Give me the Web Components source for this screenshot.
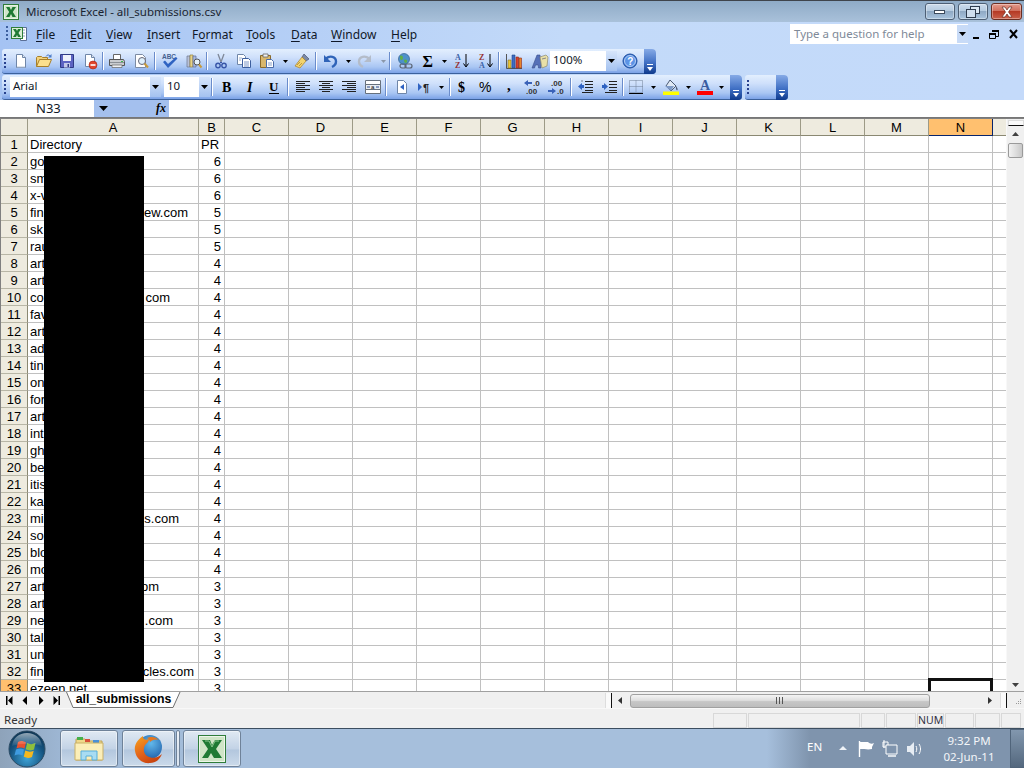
<!doctype html>
<html>
<head>
<meta charset="utf-8">
<title>Microsoft Excel</title>
<style>
  html, body { margin: 0; padding: 0; height: 768px; overflow: hidden; background: #fff; }
  x-app { font-family: "Noto Sans", "Liberation Sans", sans-serif; }
</style>
</head>
<body>
<x-app>
  <x-titlebar slot="title">Microsoft Excel - all_submissions.csv</x-titlebar>
  <x-menubar slot="menu">
    <x-menu key="F" rest="ile" w="34"></x-menu>
    <x-menu key="E" rest="dit" w="36"></x-menu>
    <x-menu key="V" rest="iew" w="41"></x-menu>
    <x-menu key="I" rest="nsert" w="45"></x-menu>
    <x-menu pre="F" key="o" rest="rmat" w="54"></x-menu>
    <x-menu key="T" rest="ools" w="45"></x-menu>
    <x-menu key="D" rest="ata" w="40"></x-menu>
    <x-menu key="W" rest="indow" w="60"></x-menu>
    <x-menu key="H" rest="elp" w="30"></x-menu>
  </x-menubar>
  <x-bands slot="bands">
    <x-band>
      <x-toolbar style="width:654px">
        <x-tool icon="new" w="23"></x-tool><x-tool icon="open" w="23"></x-tool><x-tool icon="save" w="23"></x-tool><x-tool icon="perm" w="23"></x-tool>
        <x-sep></x-sep>
        <x-tool icon="print" w="24"></x-tool><x-tool icon="preview" w="24"></x-tool>
        <x-sep></x-sep>
        <x-tool icon="spell" w="25"></x-tool><x-tool icon="research" w="23"></x-tool>
        <x-sep></x-sep>
        <x-tool icon="cut" w="23"></x-tool><x-tool icon="copy" w="23"></x-tool><x-tool icon="paste" w="24"></x-tool><x-tool icon="drop" w="11"></x-tool><x-tool icon="painter" w="24"></x-tool>
        <x-sep></x-sep>
        <x-tool icon="undo" w="26"></x-tool><x-tool icon="drop" w="7"></x-tool><x-tool icon="redo" w="26"></x-tool><x-tool icon="dropoff" w="11"></x-tool>
        <x-sep></x-sep>
        <x-tool icon="link" w="26"></x-tool><x-tool icon="sigma" w="19"></x-tool><x-tool icon="drop" w="13"></x-tool><x-tool icon="az" w="24"></x-tool><x-tool icon="za" w="23"></x-tool>
        <x-sep></x-sep>
        <x-tool icon="chart" w="26"></x-tool><x-tool icon="draw" w="23"></x-tool>
        <x-combo w="67" text="100%"></x-combo>
        <x-tool icon="help" w="26"></x-tool>
      </x-toolbar>
    </x-band>
    <x-band>
      <x-toolbar style="width:740px">
        <span style="width:1px"></span>
        <x-combo w="151" text="Arial"></x-combo><span style="width:3px"></span>
        <x-combo w="46" text="10"></x-combo>
        <x-sep></x-sep>
        <x-tool icon="bold" w="26"></x-tool><x-tool icon="italic" w="21"></x-tool><x-tool icon="under" w="25"></x-tool>
        <x-sep></x-sep>
        <x-tool icon="left" w="26"></x-tool><x-tool icon="center" w="20"></x-tool><x-tool icon="right" w="26"></x-tool><x-tool icon="merge" w="22"></x-tool>
        <x-sep></x-sep>
        <x-tool icon="rtl" w="28"></x-tool><x-tool icon="ltr" w="18"></x-tool><x-tool icon="drop" w="14"></x-tool>
        <x-sep></x-sep>
        <x-tool icon="dollar" w="22"></x-tool><x-tool icon="percent" w="24"></x-tool><x-tool icon="comma" w="24"></x-tool><x-tool icon="incdec" w="20"></x-tool><x-tool icon="decdec" w="27"></x-tool>
        <x-sep></x-sep>
        <x-tool icon="outdent" w="24"></x-tool><x-tool icon="indent" w="24"></x-tool>
        <x-sep></x-sep>
        <x-tool icon="borders" w="22"></x-tool><x-tool icon="drop" w="12"></x-tool><x-tool icon="fill" w="24"></x-tool><x-tool icon="drop" w="10"></x-tool><x-tool icon="color" w="24"></x-tool><x-tool icon="drop" w="8"></x-tool>
      </x-toolbar>
      <x-toolbar style="width:43px; margin-left:3px"></x-toolbar>
    </x-band>
  </x-bands>
  <x-formula slot="formula" cell="N33"></x-formula>
  <x-sheet slot="sheet"></x-sheet>
  <x-tabs slot="tabs" name="all_submissions"></x-tabs>
  <x-status slot="status" text="Ready"></x-status>
  <x-taskbar slot="taskbar"></x-taskbar>
</x-app>

<script>
const ICONS = {
  new: `<path d="M3.500 1.500h6l3 3v10h-9z" fill="#fff" stroke="#6f86a8"/><path d="M9.500 1.500v3h3" fill="#dfe6f0" stroke="#6f86a8"/><path d="M4 14h8" stroke="#b9c6da"/>`,
  open: `<path d="M0.500 13.500v-9l1-1h4l1 1h5v2" fill="#f3d27a" stroke="#a77f2a"/><path d="M.5 13.500l3-7h12l-3 7z" fill="#fbe08e" stroke="#a77f2a"/><path d="M10 3.500c1-2 3-2 4-.5" fill="none" stroke="#4a7bc8"/><path d="M15.500 1v3.500h-3.500z" fill="#4a7bc8"/>`,
  save: `<path d="M1.500 1.500h13v13h-13z" fill="#5c63c2" stroke="#2f3a86"/><path d="M4 2h8v6H4z" fill="#eef1fb"/><path d="M5 10h6v4.500H5z" fill="#c4c9e8"/><path d="M8.500 11h1.500v3H8.500z" fill="#2f3a86"/>`,
  perm: `<path d="M3.500 1.500h6l3 3v9h-9z" fill="#fff" stroke="#6f86a8"/><path d="M9.500 1.500v3h3" fill="#dfe6f0" stroke="#6f86a8"/><circle cx="11" cy="12" r="4" fill="#e0452c" stroke="#a62313" stroke-width=".6"/><path d="M8.500 11.200h5v1.600h-5z" fill="#fff"/>`,
  print: `<path d="M4.500 1.500h7v5h-7z" fill="#fff" stroke="#666"/><path d="M.5 6.500h14l1 2v4h-15z" fill="#c9ccd0" stroke="#555"/><path d="M1 9h14v1H1z" fill="#8b9096"/><path d="M3 12h10v2.500H3z" fill="#eef0f2" stroke="#666" stroke-width=".7"/><path d="M12 8h2v1h-2z" fill="#3bb54a"/>`,
  preview: `<path d="M2.500 1.500h7l3 3v10h-10z" fill="#fff" stroke="#7c8ba3"/><circle cx="9" cy="8" r="3.500" fill="#dff0fb" stroke="#667"/><path d="M11.500 10.500l3.500 4" stroke="#c79a3b" stroke-width="2"/>`,
  spell: `<text x="0" y="6" font-family="Liberation Sans" font-size="6.500" font-weight="700" fill="#44608f" textLength="14">ABC</text><path d="M1 9l2-1.500 3 3.500 8-7 1.500 1.500L6 15z" fill="#2f63c2"/>`,
  research: `<path d="M1 3h3v11H1z" fill="#b8c1d8" stroke="#6a7690" stroke-width=".7"/><path d="M4 2h3v12H4z" fill="#e8d48a" stroke="#93803a" stroke-width=".7"/><path d="M7 3h3v11H7z" fill="#a9bbe0" stroke="#5c6c96" stroke-width=".7"/><circle cx="11" cy="9" r="3" fill="#e6f3fb" stroke="#555"/><path d="M13 11.500l2.500 3" stroke="#c79a3b" stroke-width="2"/>`,
  cut: `<path d="M5 1l3 8M11 1L8 9" stroke="#7f8898" stroke-width="1.300" fill="none"/><circle cx="5" cy="12.500" r="2.200" fill="none" stroke="#3856a8" stroke-width="1.400"/><circle cx="11" cy="12.500" r="2.200" fill="none" stroke="#3856a8" stroke-width="1.400"/><path d="M8 9l-2 2M8 9l2 2" stroke="#3856a8"/>`,
  copy: `<path d="M1.500 1.500h6l2 2v8h-8z" fill="#fff" stroke="#6f86a8"/><path d="M6.500 5.500h6l2 2v7h-8z" fill="#fff" stroke="#3d5f9e"/><path d="M8 9h5M8 11h5M8 13h5" stroke="#7d96c6"/><path d="M3 5h3M3 7h2" stroke="#9db0d0"/>`,
  paste: `<path d="M1.500 2.500h10v12h-10z" fill="#d9b76c" stroke="#8a6a2b"/><path d="M4 1h5v3H4z" fill="#f0f0f0" stroke="#666" stroke-width=".8"/><path d="M7.500 6.500h5l2 2v6h-7z" fill="#fff" stroke="#4a6ba8"/><path d="M9 10h4M9 12h4" stroke="#8aa0c8"/>`,
  painter: `<path d="M10 1l5 5-3 2-4-4z" fill="#7c8aa6" stroke="#4a556e" stroke-width=".7"/><path d="M8 4l4 4-6 7-5-2z" fill="#f2d36d" stroke="#a77f2a" stroke-width=".7"/><path d="M3 12l3-3M5 13l3-3" stroke="#a77f2a" stroke-width=".7"/>`,
  undo: `<path d="M3 5.500c3.500-3 10-2.500 10 3 0 3-2 4.500-4 5.500" fill="none" stroke="#2f63b8" stroke-width="2.400"/><path d="M1 2v7h7z" fill="#2f63b8"/>`,
  redo: `<path d="M13 5.500C9.500 2.500 3 3 3 8.500c0 3 2 4.500 4 5.500" fill="none" stroke="#b4bcc9" stroke-width="2.400"/><path d="M15 2v7H8z" fill="#b4bcc9"/>`,
  link: `<circle cx="7" cy="6" r="5.500" fill="#4d90c9" stroke="#2f5f8f" stroke-width=".7"/><path d="M3 3c2-1 3 0 3 2s-2 3-3 1zM7 7c2-1 4 0 3 2s-3 1-3-2z" fill="#5fae4a"/><rect x="3" y="11" width="6" height="4" rx="2" fill="none" stroke="#5a6474" stroke-width="1.200"/><rect x="8" y="11" width="7" height="4" rx="2" fill="none" stroke="#5a6474" stroke-width="1.200"/>`,
  sigma: `<text x="2.500" y="13.500" font-family="Liberation Serif" font-size="16" font-weight="700" fill="#000">Σ</text>`,
  az: `<text x="1" y="7" font-family="Liberation Serif" font-size="8" font-weight="700" fill="#3a62a8">A</text><text x="1" y="15" font-family="Liberation Serif" font-size="8" font-weight="700" fill="#963232">Z</text><path d="M12 1v12" stroke="#000"/><path d="M9.500 10.500l2.500 3.500 2.500-3.500" fill="none" stroke="#000"/>`,
  za: `<text x="1" y="7" font-family="Liberation Serif" font-size="8" font-weight="700" fill="#963232">Z</text><text x="1" y="15" font-family="Liberation Serif" font-size="8" font-weight="700" fill="#3a62a8">A</text><path d="M12 1v12" stroke="#000"/><path d="M9.500 10.500l2.500 3.500 2.500-3.500" fill="none" stroke="#000"/>`,
  chart: `<path d="M.5 1v14.500H16" fill="none" stroke="#555"/><path d="M2 7h3v8H2z" fill="#e8c53a" stroke="#8a7420" stroke-width=".6"/><path d="M6 2h3v13H6z" fill="#3d6cc4" stroke="#244a8c" stroke-width=".6"/><path d="M10 4h2.500v11H10z" fill="#d8402c" stroke="#8f2617" stroke-width=".6"/><path d="M13 5h2.500v10H13z" fill="#e8862c" stroke="#8f2617" stroke-width=".6"/>`,
  draw: `<path d="M1 15L6 2h3l1 13H7.500l-.3-3H4.500l-1 3z" fill="#5570b8" stroke="#3a4f8a" stroke-width=".6"/><path d="M9 4l6-2 2 2-1 9-5 2z" fill="#e9e0a8" stroke="#8d8a70" stroke-width=".7"/><path d="M11 6l4-1" stroke="#888"/>`,
  help: `<circle cx="8" cy="8" r="7" fill="#3d78d6" stroke="#1f4f9e"/><circle cx="8" cy="8" r="5.500" fill="#5c94e6" stroke="#cfe0f8" stroke-width=".8"/><text x="5.200" y="12" font-family="Liberation Sans" font-size="10" font-weight="700" fill="#fff">?</text>`,
  bold: `<text x="3" y="13" font-family="Liberation Serif" font-size="14" font-weight="700" fill="#000">B</text>`,
  italic: `<text x="4" y="13" font-family="Liberation Serif" font-size="14" font-style="italic" font-weight="700" fill="#000">I</text>`,
  under: `<text x="3" y="12" font-family="Liberation Serif" font-size="13" font-weight="700" fill="#000">U</text><path d="M3 14.500h10" stroke="#000"/>`,
  left: `<path d="M1 2.500h14M1 4.500h9M1 6.500h14M1 8.500h9M1 10.500h14M1 12.500h9" stroke="#222"/>`,
  center: `<path d="M1 2.500h14M4 4.500h8M1 6.500h14M4 8.500h8M1 10.500h14M4 12.500h8" stroke="#222"/>`,
  right: `<path d="M1 2.500h14M6 4.500h9M1 6.500h14M6 8.500h9M1 10.500h14M6 12.500h9" stroke="#222"/>`,
  merge: `<path d="M.5 1.500h15v13H.5z" fill="#fff" stroke="#66707c"/><path d="M.5 5.500h15v5H.5z" fill="#e9ecef" stroke="#66707c"/><path d="M2 8h3M14 8h-3" stroke="#2a4a90"/><text x="6" y="10" font-family="Liberation Sans" font-size="6" fill="#000">a</text>`,
  rtl: `<path d="M3.500 1.500h6l3 3v10h-9z" fill="#fff" stroke="#6f86a8"/><path d="M6 8l4-3v6z" fill="#2f63c2"/>`,
  ltr: `<path d="M1 4l4 4-4 4z" fill="#2f63c2"/><text x="6" y="13" font-family="Liberation Sans" font-size="11" font-weight="700" fill="#222">¶</text>`,
  dollar: `<text x="3" y="13" font-family="Liberation Serif" font-size="14" font-weight="700" fill="#000">$</text>`,
  percent: `<text x="1" y="13" font-family="Liberation Sans" font-size="14" fill="#000">%</text>`,
  comma: `<text x="5" y="11" font-family="Liberation Serif" font-size="15" font-weight="700" fill="#000">,</text>`,
  incdec: `<path d="M0 4l4-3v2h4v2H4v2z" fill="#3a62b8"/><text x="9" y="7" font-family="Liberation Sans" font-size="8" font-weight="700" fill="#333">.0</text><text x="2" y="15" font-family="Liberation Sans" font-size="8" font-weight="700" fill="#333">.00</text>`,
  decdec: `<text x="3" y="7" font-family="Liberation Sans" font-size="8" font-weight="700" fill="#333">.00</text><path d="M8 12l-4 3v-2H0v-2h4V9z" fill="#3a62b8"/><text x="9" y="15" font-family="Liberation Sans" font-size="8" font-weight="700" fill="#333">.0</text>`,
  outdent: `<path d="M1 7.500l4-3.500v2h2v3H5v2z" fill="#2f63c2"/><path d="M8 2.500h8M8 5.500h8M8 8.500h8M8 11.500h8M5 1.500v1M5 13.500h11" stroke="#222"/>`,
  indent: `<path d="M7 7.500L3 4v2H1v3h2v2z" fill="#2f63c2"/><path d="M8 2.500h8M8 5.500h8M8 8.500h8M8 11.500h8M4 13.500h12" stroke="#222"/>`,
  borders: `<path d="M1.500 1.500h13v12h-13zM8 1.500v12M1.500 7.500h13" fill="none" stroke="#6f7f96" stroke-dasharray="1 1"/><path d="M1 14.500h14" stroke="#000"/>`,
  fill: `<path d="M7 1l6 6-5 5-5-5z" fill="#dfe9f5" stroke="#4b5a72"/><path d="M13 7c1 1.500 2 3 1.500 4s-2 0-1.500-4z" fill="#4b5a72"/><path d="M2 7h9l-3 5z" fill="#7f9bc8"/><path d="M0 12.500h16v3.500H0z" fill="#ffff00"/>`,
  color: `<text x="3" y="11" font-family="Liberation Serif" font-size="14" font-weight="700" fill="#3a5ca0">A</text><path d="M0 12h16v4H0z" fill="#ff0000"/>`,
  drop: `<path d="M4 7h5L6.500 10z" fill="#000"/>`,
  dropoff: `<path d="M4 7h5L6.500 10z" fill="#8a97aa"/>`
};

class Base extends HTMLElement {
  shadow(html) {
    this.attachShadow({mode: 'open'}).innerHTML = html;
  }
}

customElements.define('x-app', class extends Base {
  constructor() {
    super();
    this.shadow(`
      <style>
        :host { display: flex; flex-direction: column; width: 1024px; height: 768px; overflow: hidden; }
        .fill { flex: 1; min-height: 0; display: flex; }
      </style>
      <slot name="title"></slot><slot name="menu"></slot><slot name="bands"></slot><slot name="formula"></slot>
      <div class="fill"><slot name="sheet"></slot></div>
      <slot name="tabs"></slot><slot name="status"></slot><slot name="taskbar"></slot>`);
  }
});

customElements.define('x-titlebar', class extends Base {
  constructor() {
    super();
    this.shadow(`
      <style>
        :host { display: flex; align-items: center; height: 22px; box-sizing: border-box; border-top: 1px solid #3f444c;
          background: linear-gradient(#8fabc7, #a9c1da); font: 11.5px "Noto Sans", sans-serif; color: #1a2430; }
        .logo { margin: 1px 7px 0 3px; width: 16px; height: 16px; }
        .text { flex: 1; }
        .ctrls { display: flex; gap: 3px; margin-right: 2px; }
        .b { width: 30px; height: 17px; box-sizing: border-box; border: 1px solid #4d5f75; border-radius: 3px; display: flex; align-items: center; justify-content: center;
          background: linear-gradient(#cddcec 0, #b5cbe0 45%, #8fa9c4 50%, #a9c4de 100%); box-shadow: inset 0 0 0 1px rgba(255,255,255,.35); }
        .c { background: linear-gradient(#e39a8c 0, #d0705e 45%, #b53a25 50%, #c9604a 100%); border-color: #6b2e22; width: 31px; }
      </style>
      <svg class="logo" viewBox="0 0 16 16"><rect x=".5" y=".5" width="15" height="15" fill="#e8f3e4" stroke="#2f7d3a"/><rect x="2" y="2" width="12" height="12" fill="#cfe6c8"/><path d="M3 3h3.500L8 6l1.500-3H13l-3.200 5 3.200 5H9.500L8 10l-1.500 3H3l3.200-5z" fill="#1f7a33"/></svg>
      <span class="text"><slot></slot></span>
      <div class="ctrls">
        <div class="b"><svg width="12" height="6"><rect x=".5" y="1.500" width="10" height="3" fill="#fff" stroke="#3c4a5c"/></svg></div>
        <div class="b"><svg width="14" height="12"><rect x="4.500" y=".5" width="9" height="7" fill="#dce8f3" stroke="#2f3c4e"/><rect x=".5" y="3.500" width="9" height="8" fill="#cfdeee" stroke="#2f3c4e"/></svg></div>
        <div class="b c"><svg width="14" height="12" viewBox="0 0 14 12"><path d="M2 1h3l2 3 2-3h3L8.500 6 12 11H9L7 8l-2 3H2l3.500-5z" fill="#fff" stroke="#6b2e22" stroke-width=".7"/></svg></div>
      </div>`);
  }
});

customElements.define('x-menubar', class extends Base {
  constructor() {
    super();
    this.shadow(`
      <style>
        :host { display: flex; align-items: center; height: 27px; box-sizing: border-box; padding: 0 0 4px 6px;
          background: linear-gradient(90deg, #a5c3f3, #c3daf9 55%, #c4dafa); font: 12px "Noto Sans", sans-serif; color: #101828; }
        .grip { width: 2px; height: 16px; background: repeating-linear-gradient(#3d5f9e 0 2px, transparent 2px 4px); }
        .logo { margin: 0 8px 0 2px; width: 18px; height: 18px; }
        .help { margin-left: auto; display: flex; align-items: center; }
        .box { width: 178px; height: 20px; box-sizing: border-box; border: 1px solid #fff; background: #fff; color: #808a98; display: flex; align-items: center; padding-left: 3px; font-size: 11.5px; }
        .box span { flex: 1; }
        .box i { width: 11px; height: 18px; margin-right: -1px; background: #c8dbf7; display: flex; align-items: center; justify-content: center; }
        svg.c { display: block; }
        ::slotted(x-menu) { margin-top: 2px; }
      </style>
      <div class="grip"></div>
      <svg class="logo" viewBox="0 0 18 18"><path d="M10.500 2.500h6v13h-6z" fill="#fff" stroke="#5a6f96"/><path d="M12 5h3M12 8h3M12 11h3" stroke="#8ea2c4"/><rect x="1.500" y="2.500" width="11" height="11" fill="#dcefd6" stroke="#2f7d3a"/><path d="M3 4h3l1 2 1-2h3L8.500 8 11 12H8L7 10l-1 2H3l2.500-4z" fill="#1f7a33"/></svg>
      <slot></slot>
      <div class="help">
        <div class="box"><span>Type a question for help</span><i><svg width="7" height="4"><path d="M0 0h7L3.500 4z" fill="#000"/></svg></i></div>
        <svg class="c" width="56" height="18" viewBox="0 0 56 18">
          <path d="M5 12h6v2H5z" fill="#000"/>
          <path d="M24.500 6.500h6v5h-3M21.500 9.500h6v4h-6z" fill="none" stroke="#000"/><path d="M24 5h7v2h-7zM21 8h7v2h-7z" fill="#000"/>
          <path d="M42 5l7 8M49 5l-7 8" stroke="#000" stroke-width="2"/>
        </svg>
      </div>`);
  }
});

customElements.define('x-menu', class extends Base {
  connectedCallback() {
    if (this.shadowRoot) return;
    const a = n => this.getAttribute(n) || '';
    this.shadow(`<style>:host { display: block; width: ${a('w')}px; } u { text-underline-offset: 2px; }</style>${a('pre')}<u>${a('key')}</u>${a('rest')}`);
  }
});

customElements.define('x-bands', class extends Base {
  constructor() {
    super();
    this.shadow(`<style>:host { display: flex; flex-direction: column; gap: 1px; height: 51px; padding-left: 2px; box-sizing: border-box; background: linear-gradient(90deg, #a5c3f3, #c3daf9 55%, #c4dafa); }</style><slot></slot>`);
  }
});

customElements.define('x-band', class extends Base {
  constructor() {
    super();
    this.shadow(`<style>:host { display: flex; }</style><slot></slot>`);
  }
});

customElements.define('x-toolbar', class extends Base {
  constructor() {
    super();
    this.shadow(`
      <style>
        :host { display: flex; align-items: center; flex: none; height: 25px; box-sizing: border-box; padding-right: 12px; position: relative;
          border-radius: 3px 4px 4px 3px; border-bottom: 1px solid #3b619c;
          background: linear-gradient(#e3effe 0, #cfe0fb 35%, #a9c6f3 75%, #7ba2e7 100%); }
        .grip { width: 2px; height: 15px; margin: 0 3px 0 2px; background: repeating-linear-gradient(#27418e 0 2px, transparent 2px 4px); flex: none; }
        .end { position: absolute; right: 0; top: 0; bottom: -1px; width: 12px; border-radius: 0 4px 4px 0;
          background: linear-gradient(#86aae6, #3f6fc4 55%, #0f3a8c); display: flex; flex-direction: column; align-items: center; justify-content: flex-end; padding-bottom: 3px; box-sizing: border-box; }
        ::slotted(x-tool), ::slotted(span) { flex: none; }
      </style>
      <div class="grip"></div><slot></slot>
      <div class="end"><svg width="7" height="7"><path d="M0 0h6v1H0zM0 3h6L3 7z" fill="#fff"/></svg></div>`);
  }
});

customElements.define('x-tool', class extends Base {
  connectedCallback() {
    if (this.shadowRoot) return;
    const w = this.getAttribute('w'), i = this.getAttribute('icon');
    const drop = i.startsWith('drop');
    this.shadow(`
      <style>:host { display: flex; align-items: center; justify-content: center; width: ${w}px; height: 24px; } svg { display: block; overflow: visible; flex: none; }</style>
      <svg width="${drop ? 12 : 16}" height="16" viewBox="0 0 ${drop ? 12 : 16} 16">${ICONS[i] || ''}</svg>`);
  }
});

customElements.define('x-sep', class extends Base {
  constructor() {
    super();
    this.shadow(`<style>:host { display: block; flex: none; width: 1px; height: 18px; margin: 0 2px 0 1px; background: #6a8ccb; box-shadow: 1px 0 0 #fff; }</style>`);
  }
});

customElements.define('x-combo', class extends Base {
  connectedCallback() {
    if (this.shadowRoot) return;
    this.shadow(`
      <style>
        :host { display: flex; flex: none; align-items: center; width: ${this.getAttribute('w')}px; height: 20px; box-sizing: border-box; background: #fff;
          font: 11.5px "Noto Sans", sans-serif; color: #101828; }
        span { flex: 1; padding: 0 0 3px 3px; }
        i { width: 11px; height: 100%; background: linear-gradient(#d6e5fb, #a4c2f0); display: flex; align-items: center; justify-content: center; }
      </style>
      <span>${this.getAttribute('text')}</span><i><svg width="7" height="4"><path d="M0 0h7L3.500 4z" fill="#000"/></svg></i>`);
  }
});

customElements.define('x-formula', class extends Base {
  connectedCallback() {
    if (this.shadowRoot) return;
    this.shadow(`
      <style>
        :host { display: flex; height: 18px; box-sizing: border-box; background: #fff; border-bottom: 1px solid #777; font: 13px "Noto Sans", sans-serif; color: #101828; }
        .name { width: 94px; padding-left: 36px; box-sizing: border-box; line-height: 17px; }
        .rest { width: 75px; background: #a4c0ee; display: flex; align-items: center; justify-content: space-between; padding: 0 3px 0 5px; box-sizing: border-box; height: 17px; }
        em { font: italic 700 12px "Liberation Serif", serif; color: #000; }
      </style>
      <div class="name">${this.getAttribute('cell')}</div>
      <div class="rest"><svg width="9" height="5"><path d="M0 0h9L4.500 5z" fill="#000"/></svg><em>fx</em></div>`);
  }
});

const ROWS = [
  ['Directory', '', 'PR'], ['go', '', 6], ['sm', '', 6], ['x-v', '', 6], ['fin', 'ew.com', 5, 7], ['sk', '', 5], ['rau', '', 5],
  ['art', '', 4], ['art', '', 4], ['co', 'com', 4, 25], ['fav', '', 4], ['art', '', 4], ['ad', '', 4], ['tin', '', 4], ['on', '', 4],
  ['for', '', 4], ['art', '', 4], ['int', '', 4], ['gh', '', 4], ['be', '', 4], ['itis', '', 4], ['ka', '', 4],
  ['mi', 's.com', 4, 16], ['so', '', 4], ['blo', '', 4], ['mo', '', 4], ['art', 'om', 3, 36], ['art', '', 3], ['ne', '.com', 3, 22],
  ['tal', '', 3], ['un', '', 3], ['fin', 'cles.com', 3, 1], ['ezeen.net', '', 3]
];

customElements.define('x-sheet', class extends Base {
  constructor() {
    super();
    const cols = 'ABCDEFGHIJKLMN'.split('');
    let html = '<div class="h corner"></div>';
    cols.forEach(c => { html += `<div class="h${c == 'N' ? ' on' : ''}">${c}</div>`; });
    html += '<div class="h end"></div>';
    ROWS.forEach((r, i) => {
      const n = i + 1, last = n == 33;
      html += `<div class="h r${last ? ' on' : ''}">${n}</div>`;
      html += `<div class="c">${r[0]}${r[1] ? `<span style="margin-left:auto;margin-right:${r[3]}px">${r[1]}</span>` : ''}</div>`;
      html += `<div class="c${i ? ' num' : ''}">${r[2]}</div>`;
      for (let k = 2; k < cols.length; k++) html += `<div class="c${last && k == 13 ? ' active' : ''}"></div>`;
      html += '<div class="c"></div>';
    });
    this.shadow(`
      <style>
        :host { display: flex; flex: 1; min-width: 0; background: #fff; overflow: hidden; position: relative; border-top: 1px solid #808080; border-left: 1px solid #808080; box-sizing: border-box; font: 13px "Liberation Sans", sans-serif; color: #000; }
        .grid { flex: 1; display: grid; grid-template-columns: 27px 171px 26px repeat(12, 64px) 14px; grid-template-rows: 17px; grid-auto-rows: 17px; align-content: start; overflow: hidden; }
        .grid > div { box-sizing: border-box; white-space: nowrap; line-height: 18px; }
        .h { background: #eeebdf; text-align: center; border-right: 1px solid #9d9a86; border-bottom: 1px solid #8a8872; }
        .r { border-bottom-color: #b8b6a6; border-right-color: #8a8872; }
        .h.on { background: #ffc06f; border-right-color: #08246b; border-bottom-color: #08246b; }
        .r.on { border-right-color: #8a8872; border-bottom: 0; }
        .h.end { border-right: 0; }
        .c { border-right: 1px solid #c0c0c0; border-bottom: 1px solid #c0c0c0; padding: 0 3px 0 2px; display: flex; position: relative; overflow: visible; }
        .num { justify-content: flex-end; }
        .active::after { content: ""; position: absolute; left: -1px; top: -2px; width: 65px; height: 18px; box-sizing: border-box; border: 3px solid #111; }
        .redact { position: absolute; left: 43px; top: 37px; width: 100px; height: 526px; background: #000; }
        .v { width: 18px; flex: none; background: #f0f0f0; display: flex; flex-direction: column; align-items: center; box-sizing: border-box; padding-top: 1px; border-left: 1px solid #f8f8f8; }
        .split { width: 16px; height: 6px; box-sizing: border-box; background: #fafafa; border: 1px solid #ddd; border-bottom: 1px solid #111; }
        .arrow { margin: 6px 0 7px; }
        .thumb { width: 15px; height: 15px; box-sizing: border-box; border: 1px solid #9a9a9a; border-radius: 2px; background: linear-gradient(90deg, #f2f2f2, #dcdcdc 55%, #c8c8c8); }
        .down { margin-top: auto; margin-bottom: 4px; }
      </style>
      <div class="grid">${html}</div>
      <div class="redact"></div>
      <div class="v"><div class="split"></div>
        <svg class="arrow" width="7" height="4"><path d="M3.500 0L7 4H0z" fill="#404040"/></svg>
        <div class="thumb"></div>
        <svg class="down" width="7" height="4"><path d="M0 0h7L3.500 4z" fill="#404040"/></svg>
      </div>`);
  }
});

customElements.define('x-tabs', class extends Base {
  connectedCallback() {
    if (this.shadowRoot) return;
    const tri = (d) => `<svg width="8" height="9" viewBox="0 0 8 9"><path d="${d}" fill="#000"/></svg>`;
    this.shadow(`
      <style>
        :host { display: flex; align-items: stretch; height: 17px; box-sizing: border-box; background: #f0f0f0; border-top: 1px solid #a0a0a0; }
        .nav { display: flex; align-items: center; width: 66px; padding-left: 5px; gap: 8px; box-sizing: border-box; flex: none; }
        .tab { position: relative; width: 115px; flex: none; text-align: center; font: 700 12.3px "Liberation Sans", sans-serif; line-height: 15px; color: #000; }
        .tab svg { position: absolute; inset: 0; z-index: 0; }
        .tab span { position: relative; }
        .space { flex: 1; }
        .hs { width: 402px; flex: none; display: flex; align-items: center; margin-top: 1px; }
        .split { width: 7px; height: 15px; box-sizing: border-box; background: #fafafa; border-right: 1px solid #111; border-left: 1px solid #ddd; flex: none; }
        .track { flex: 1; display: flex; align-items: center; }
        .thumb { width: 300px; height: 14px; box-sizing: border-box; border: 1px solid #a0a0a0; border-radius: 3px; background: linear-gradient(#f4f4f4, #dedede 45%, #c6c6c6 55%, #bdbdbd); display: flex; align-items: center; justify-content: center; margin-left: 8px; flex: none; }
        .grip { width: 17px; flex: none; display: flex; align-items: flex-end; justify-content: flex-end; padding: 0 2px 2px 0; box-sizing: border-box; }
      </style>
      <div class="nav">
        ${tri('M1 0h1.500v9H1zM7.500 0v9L3 4.500z')}${tri('M6 0v9L1.500 4.500z')}${tri('M2 0v9l4.500-4.500z')}${tri('M.5 0v9L5 4.500zM5.500 0H7v9H5.500z')}
      </div>
      <div class="tab"><svg width="115" height="16" viewBox="0 0 115 16"><path d="M.5 0L7 15.500h100L114 0" fill="#fff" stroke="#707070"/></svg><span>${this.getAttribute('name')}</span></div>
      <div class="space"></div>
      <div class="hs">
        <div class="split"></div>
        <div class="track">
          <svg width="4" height="7" style="margin-left:6px;flex:none"><path d="M4 0v7L0 3.500z" fill="#333"/></svg>
          <div class="thumb"><svg width="8" height="7"><path d="M.5 0v7M3.500 0v7M6.500 0v7" stroke="#555"/></svg></div>
          <svg width="4" height="7" style="margin-left:58px;flex:none"><path d="M0 0v7l4-3.500z" fill="#333"/></svg>
        </div>
        <div class="split"></div>
      </div>
      <div class="grip"><svg width="8" height="8"><path d="M6 1h1v1H6zM4 3h1v1H4zM6 3h1v1H6zM2 5h1v1H2zM4 5h1v1H4zM6 5h1v1H6z" fill="#999"/></svg></div>`);
  }
});

customElements.define('x-status', class extends Base {
  connectedCallback() {
    if (this.shadowRoot) return;
    const ws = [34, 112, 24, 30, 27, 29, 25, 20];
    const cells = ws.map((w, i) => `<div style="width:${w}px">${i == 4 ? 'NUM' : ''}</div>`).join('');
    this.shadow(`
      <style>
        :host { display: flex; align-items: center; height: 20px; box-sizing: border-box; background: #f0f0f0; border-top: 1px solid #f8f8f8; font: 11.5px "Noto Sans", sans-serif; color: #333; padding-left: 4px; }
        span { margin-top: 1px; }
        .p { margin-left: auto; display: flex; gap: 1px; padding: 3px 3px 0 0; }
        .p div { height: 15px; box-sizing: border-box; border: 1px solid #d8d8d8; font: 10.5px/13px "Noto Sans", sans-serif; text-align: center; color: #334; }
      </style>
      <span>${this.getAttribute('text')}</span><div class="p">${cells}</div>`);
  }
});

customElements.define('x-taskbar', class extends Base {
  constructor() {
    super();
    this.shadow(`
      <style>
        :host { display: flex; align-items: stretch; height: 40px; box-sizing: border-box; border-top: 1px solid #3c4e60; font: 12px "Noto Sans", sans-serif; color: #fff;
          background: linear-gradient(90deg, #8ea3ba 0, #9db6d3 60px, #a6bfdc 240px, #a6bfdc 767px, #7f94ad 810px, #7f94ad 100%); }
        .orb { width: 54px; margin-right: 6px; display: flex; align-items: center; justify-content: center; flex: none; }
        .btn { flex: none; margin: 1px 2px; box-sizing: border-box; border: 1px solid #6f8299; border-radius: 3px; display: flex; align-items: center; justify-content: center;
          background: linear-gradient(#e0e9f3, #c3d3e6 50%, #b3c7de 55%, #cbdaea); box-shadow: inset 0 0 0 1px rgba(255,255,255,.45); }
        .thin { width: 4px; margin: 1px 3px 1px 0; }
        .tray { margin-left: auto; display: flex; align-items: center; }
        .en { width: 29px; margin-top: -4px; font-size: 11.5px; }
        .clock { width: 62px; margin-left: 10px; text-align: center; line-height: 16px; font-size: 11.5px; color: #f4f6f9; }
        .show { width: 14px; align-self: stretch; margin-left: 10px; box-sizing: border-box; border: 1px solid #50647a; border-right: 0; background: linear-gradient(#8297ae, #54687e); }
        svg { display: block; }
      </style>
      <div class="orb">
        <svg width="38" height="38" viewBox="0 0 38 38">
          <defs>
            <radialGradient id="o" cx=".5" cy=".75" r=".8"><stop offset="0" stop-color="#3fa4d8"/><stop offset=".6" stop-color="#14527e"/><stop offset="1" stop-color="#0b2c48"/></radialGradient>
            <linearGradient id="s" x1="0" y1="0" x2="0" y2="1"><stop offset="0" stop-color="#fff" stop-opacity=".55"/><stop offset="1" stop-color="#fff" stop-opacity=".05"/></linearGradient>
          </defs>
          <circle cx="19" cy="19" r="18" fill="url(#o)" stroke="#2b4a62"/>
          <path d="M10 12c3-1.500 5-1 8 .500l-1.500 6c-3-1.500-5-1.500-8 0z" fill="#e8502e"/>
          <path d="M19 13c3 1.500 5 1.500 8.500 0L26 19.500c-3 1.300-5 1.300-8.200-.200z" fill="#8ebf3c"/>
          <path d="M8 19.500c3-1.500 5-1.500 8 0l-1.500 6c-3-1.500-5-1.500-8 0z" fill="#3f9be0"/>
          <path d="M17.300 20.500c3 1.500 5.400 1.500 8.400.200L24 27c-3 1.300-5.200 1.200-8.200-.200z" fill="#f5b81f"/>
          <path d="M4 16C5 8 11 3 19 3s14 5 15 13c-9-3-21-3-30 0z" fill="url(#s)"/>
        </svg>
      </div>
      <div class="btn" style="width:58px;margin-left:0">
        <svg width="32" height="30" viewBox="0 0 32 30">
          <path d="M3 5h9l2 2h15v19H3z" fill="#f0d98a" stroke="#bda45c"/>
          <path d="M4 3h6v3H4z" fill="#46b04a"/><path d="M12 5h5v3h-5z" fill="#d8503a"/><path d="M20 6h6v3h-6z" fill="#4a90d8"/>
          <path d="M2 9h28v17H2z" fill="#fbeeb8" stroke="#c9b068"/>
          <path d="M8 26v-9h16v9h-5v-4h-6v4z" fill="#a8dcf2" stroke="#57aedb"/>
        </svg>
      </div>
      <div class="btn" style="width:53px;margin-left:2px;margin-right:1px">
        <svg width="32" height="32" viewBox="0 0 32 32">
          <defs>
            <linearGradient id="fx" x1="0" y1="0" x2=".6" y2="1"><stop offset="0" stop-color="#f7a41d"/><stop offset=".6" stop-color="#e2621a"/><stop offset="1" stop-color="#c8440f"/></linearGradient>
            <radialGradient id="gl" cx=".55" cy=".35" r=".7"><stop offset="0" stop-color="#62b8ea"/><stop offset="1" stop-color="#1f5ea8"/></radialGradient>
          </defs>
          <circle cx="17" cy="14" r="12" fill="url(#gl)"/>
          <path d="M10 3C4 7 1 12 2 18c1 8 8 13 15 12 6 0 10-4 12-9-4 4-10 5-15 2-4-3-4-9-1-12 2-2 3-3 3-5-2 1-4 1-5 0-1-1-1-2-1-3z" fill="url(#fx)"/>
          <path d="M14 5c4-2 9-1 12 2-4-1-7 0-9 2 0-2-1-3-3-4z" fill="#e8761c"/>
        </svg>
      </div>
      <div class="btn thin"></div>
      <div class="btn" style="width:58px;margin-left:0">
        <svg width="28" height="28" viewBox="0 0 28 28">
          <rect x=".5" y=".5" width="27" height="27" fill="#eef6ea" stroke="#2f7d3a"/>
          <rect x="2" y="2" width="24" height="24" fill="#cfe5c6"/>
          <path d="M4 5h8l2 5 3-5h7l-6 9 6 9h-8l-3-5-3 5H4l6-9z" fill="#1f7a33"/>
          <path d="M7 6h4l3 6 3-6h4" fill="none" stroke="#8cc88f"/>
        </svg>
      </div>
      <div class="tray">
        <span class="en">EN</span>
        <svg width="92" height="20" viewBox="0 0 92 20">
          <path d="M3 11h8L7 7z" fill="#eef2f7"/>
          <path d="M23.500 2v16" stroke="#fff" stroke-width="1.400"/><path d="M24 3h8c2 2 4 2 6 1l-2 4 0 2c-4 1-7 0-12 0z" fill="#fff"/>
          <path d="M47 3h5v5h-5z" fill="none" stroke="#fff"/><path d="M50 6h11v9H50z" fill="#7f94ad" stroke="#fff"/><path d="M52 17h8" stroke="#fff" stroke-width="1.400"/><path d="M48 1v8" stroke="#fff"/>
          <path d="M71 7h3l4-4v14l-4-4h-3z" fill="#e6ecf3"/><path d="M80 7c1 2 1 4 0 6M83 5c2 3 2 7 0 10" fill="none" stroke="#fff"/>
        </svg>
        <div class="clock">9:32 PM<br>02-Jun-11</div>
        <div class="show"></div>
      </div>`);
  }
});
</script>
</body>
</html>
